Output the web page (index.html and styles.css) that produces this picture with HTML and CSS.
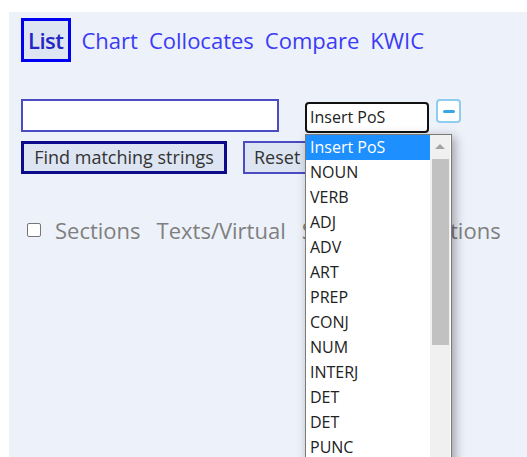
FILE: index.html
```html
<!DOCTYPE html>
<html lang="en">
<head>
<meta charset="utf-8">
<title>Search</title>
<link rel="stylesheet" href="styles.css">
</head>
<body>
<main class="panel">
  <nav class="tabs">
    <a class="tab tab-active" href="#">List</a>
    <a class="tab" href="#">Chart</a>
    <a class="tab" href="#">Collocates</a>
    <a class="tab" href="#">Compare</a>
    <a class="tab" href="#">KWIC</a>
  </nav>

  <form class="query">
    <div class="query-row">
      <input class="query-input" type="text">
      <div class="pos-picker">
        <div class="pos-select">Insert PoS</div>
        <ul class="pos-list">
          <li class="pos-item pos-item-selected">Insert PoS</li>
          <li class="pos-item">NOUN</li>
          <li class="pos-item">VERB</li>
          <li class="pos-item">ADJ</li>
          <li class="pos-item">ADV</li>
          <li class="pos-item">ART</li>
          <li class="pos-item">PREP</li>
          <li class="pos-item">CONJ</li>
          <li class="pos-item">NUM</li>
          <li class="pos-item">INTERJ</li>
          <li class="pos-item">DET</li>
          <li class="pos-item">DET</li>
          <li class="pos-item">PUNC</li>
        </ul>
        <div class="pos-scroll">
          <span class="pos-scroll-up"></span>
          <span class="pos-scroll-thumb"></span>
        </div>
      </div>
      <button class="icon-btn" type="button" aria-label="Remove">
        <span class="icon-minus"></span>
      </button>
    </div>
    <div class="button-row">
      <button class="btn btn-primary" type="button">Find matching strings</button>
      <button class="btn" type="button">Reset</button>
    </div>
  </form>

  <div class="options">
    <label class="option"><span class="checkbox"></span>Sections</label>
    <span class="option">Texts/Virtual</span>
    <span class="option">Subcorpus sections</span>
  </div>
</main>
</body>
</html>
```

FILE: styles.css
```css
html, body {
  margin: 0;
  padding: 0;
  background: #ffffff;
  height: 100%;
  overflow: hidden;
}

body {
  font-family: "Open Sans", "DejaVu Sans", sans-serif;
}

.panel {
  margin: 12px 0 0 9px;
  height: calc(100% - 12px);
  background: #edf1f9;
  padding: 6px 0 0 12px;
  box-sizing: border-box;
}

/* top tabs */
.tabs {
  display: flex;
  align-items: center;
  gap: 11px;
}

.tab {
  font-size: 22px;
  line-height: 30px;
  color: #3b3bf7;
  text-decoration: none;
}

.tab-active {
  border: 3px solid #0000ee;
  background: #dde5f2;
  padding: 4px 4px;
  color: #2626c4;
  font-weight: 600;
  letter-spacing: -0.5px;
}

/* query form */
.query {
  margin-top: 37px;
}

.query-row {
  display: flex;
  align-items: flex-start;
}

.query-input {
  width: 258px;
  height: 33px;
  box-sizing: border-box;
  border: 2px solid #4b4bc2;
  background: #ffffff;
  margin: 0;
}

.pos-picker {
  position: relative;
  margin: 3px 0 0 26px;
}

.pos-select {
  width: 124px;
  height: 31px;
  box-sizing: border-box;
  border: 2px solid #111111;
  border-radius: 4px;
  background: #ffffff;
  font-size: 16px;
  line-height: 27px;
  padding-left: 3px;
  color: #222222;
}

/* open dropdown list */
.pos-list {
  position: absolute;
  top: 32px;
  left: 0;
  width: 147px;
  height: 340px;
  box-sizing: border-box;
  margin: 0;
  padding: 0 21px 0 0;
  list-style: none;
  background: #ffffff;
  border: 1px solid #7a7a7a;
  box-shadow: 3px 3px 10px rgba(0, 0, 0, 0.35);
  z-index: 2;
  overflow: hidden;
}

.pos-item {
  height: 25px;
  line-height: 25px;
  font-size: 16px;
  padding-left: 4px;
  color: #222222;
}

.pos-item-selected {
  background: #1e8fff;
  color: #ffffff;
}

.pos-scroll {
  position: absolute;
  top: 33px;
  left: 125px;
  width: 20px;
  height: 338px;
  background: #f0f0f0;
  z-index: 3;
}

.pos-scroll-up {
  position: absolute;
  top: 9px;
  left: 5px;
  width: 0;
  height: 0;
  border-left: 5px solid transparent;
  border-right: 5px solid transparent;
  border-bottom: 5px solid #a3a3a3;
}

.pos-scroll-thumb {
  position: absolute;
  top: 24px;
  left: 2px;
  width: 17px;
  height: 186px;
  background: #c1c1c1;
}

.icon-btn {
  margin-left: 7px;
  width: 25px;
  height: 24px;
  box-sizing: border-box;
  border: 2px solid #8fcdef;
  border-radius: 4px;
  background: #ffffff;
  padding: 0;
  display: flex;
  align-items: center;
  justify-content: center;
}

.icon-minus {
  display: block;
  width: 12px;
  height: 3px;
  border-radius: 2px;
  background: #36a7e2;
}

.button-row {
  display: flex;
  gap: 16px;
  margin-top: 8px;
}

.btn {
  font-family: inherit;
  font-size: 18px;
  line-height: 23px;
  height: 33px;
  padding: 0 9px;
  color: #333333;
  background: #dde5f2;
  border: 2px solid #4b4bc2;
  margin: 0;
}

.btn-primary {
  width: 206px;
  border: 3px solid #0b0b8c;
}

/* options line */
.options {
  display: flex;
  align-items: center;
  gap: 16px;
  margin-top: 41px;
  padding-left: 6px;
  font-size: 22px;
  line-height: 30px;
  color: #7f7f7f;
}

.option {
  display: flex;
  align-items: center;
}

.checkbox {
  display: inline-block;
  width: 14px;
  height: 14px;
  box-sizing: border-box;
  border: 1px solid #767676;
  border-radius: 2px;
  background: #ffffff;
  margin-right: 14px;
}
```
